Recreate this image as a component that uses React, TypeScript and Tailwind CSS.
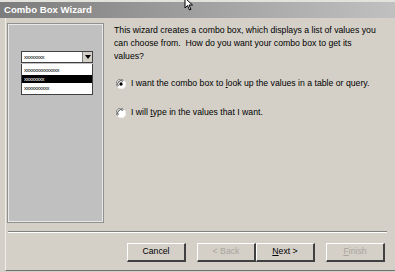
import React from "react";

const font = { fontFamily: "'Liberation Sans', Arial, sans-serif" };

function Btn({ label, disabled }: { label: React.ReactNode; disabled?: boolean }) {
  return (
    <div className="w-[59px] h-[19px] flex items-center justify-center bg-[#d4d0c8] border-t border-l border-t-white border-l-white border-r-2 border-b-2 border-r-[#404040] border-b-[#404040] text-[8.7px]">
      <span className={disabled ? "text-[#a8a49c]" : "text-black"}>{label}</span>
    </div>
  );
}

function Radio({ checked }: { checked?: boolean }) {
  return (
    <svg width="10" height="10" viewBox="0 0 12 12" className="shrink-0">
      <circle cx="6" cy="6" r="5.5" fill="#fff" />
      <circle cx="6" cy="6" r="4.5" fill="#fff" />
      <path d="M1.8 9.2 A5.2 5.2 0 0 1 9.2 1.8" stroke="#808080" strokeWidth="1.2" fill="none" />
      <path d="M2.8 8.4 A4 4 0 0 1 8.4 2.8" stroke="#303030" strokeWidth="1.1" fill="none" />
      <path d="M10.2 2.8 A5.2 5.2 0 0 1 2.8 10.2" stroke="#f4f4f4" strokeWidth="1.2" fill="none" />
      {checked && <circle cx="6" cy="6" r="2" fill="#000" />}
    </svg>
  );
}

export default function App() {
  return (
    <div className="w-[395px] h-[272px] bg-[#d4d0c8] relative overflow-hidden flex flex-col" style={font}>
      <div className="h-[2px] bg-[#e4e2dc]" />
      <div className="h-[16px] bg-gradient-to-r from-[#7c7c7c] via-[#a0a0a0] to-[#c0c0c0] flex items-center pl-[4px]">
        <span className="text-white font-bold text-[9.6px] leading-none">Combo Box Wizard</span>
      </div>
      <div className="flex flex-1 border-l border-l-[#f0eee8] ml-[5px] border-b border-b-[#707070] mb-[1px]">
        <div className="flex flex-col flex-1">
          <div className="flex pt-[6px] pl-[2px]">
            <div className="w-[95px] h-[198px] bg-[#c0c0c0] border border-[#e8e8e8] outline outline-1 outline-[#909090] flex flex-col items-center pt-[26px] pl-[3px]">
              <div className="w-[72px] flex flex-col">
                <div className="h-[12px] bg-white border border-[#404040] flex items-center pl-[2px] justify-between">
                  <span className="text-[6px] leading-none text-black tracking-[-0.5px]">xxxxxxxx</span>
                  <div className="w-[10px] h-[10px] bg-[#d4d0c8] border-l border-[#808080] flex items-center justify-center">
                    <svg width="6" height="4" viewBox="0 0 6 4"><path d="M0 0h6L3 4z" fill="#000" /></svg>
                  </div>
                </div>
                <div className="h-[31px] bg-white border border-[#404040] border-t-0 mt-[1px] flex flex-col pt-[2px]">
                  <div className="h-[7px] pl-[2px] flex items-center"><span className="text-[6px] leading-none tracking-[-0.5px]">xxxxxxxxxxxxxx</span></div>
                  <div className="h-[8px] mt-[2px] pl-[2px] bg-black flex items-center"><span className="text-[6px] leading-none text-white tracking-[-0.5px]">xxxxxxxx</span></div>
                  <div className="h-[7px] mt-[1px] pl-[2px] flex items-center"><span className="text-[6px] leading-none tracking-[-0.5px]">xxxxxxxxxx</span></div>
                </div>
              </div>
            </div>
            <div className="flex flex-col pl-[11px] pt-[0px] text-[8.7px] text-black">
              <p className="leading-[13px] w-[266px]">
                This wizard creates a combo box, which displays a list of values you can choose from.&nbsp; How do you want your combo box to get its values?
              </p>
              <div className="flex items-center mt-[14px] ml-[2px] gap-[5px] h-[13px]">
                <Radio checked />
                <span>I want the combo box to <u>l</u>ook up the values in a table or query.</span>
              </div>
              <div className="flex items-center mt-[16px] ml-[2px] gap-[5px] h-[13px]">
                <Radio />
                <span>I will <u>t</u>ype in the values that I want.</span>
              </div>
            </div>
          </div>
          <div className="mt-[9px] mx-[2px] mr-[8px] h-[2px] border-t border-t-[#808080] border-b border-b-white" />
          <div className="flex justify-end pr-[10px] pt-[10px]">
            <Btn label="Cancel" />
            <div className="w-[11px]" />
            <Btn label="< Back" disabled />
            <Btn label={<span><u>N</u>ext &gt;</span>} />
            <div className="w-[11px]" />
            <Btn label={<span><u>F</u>inish</span>} disabled />
          </div>
        </div>
      </div>
      <svg className="absolute left-[184px] top-[-3px]" width="12" height="14" viewBox="0 0 12 14">
        <path d="M1 1 L1 11 L3.5 8.5 L5.5 13 L7 12.3 L5 8 L8.5 8 Z" fill="#fff" stroke="#000" strokeWidth="1" />
      </svg>
    </div>
  );
}
